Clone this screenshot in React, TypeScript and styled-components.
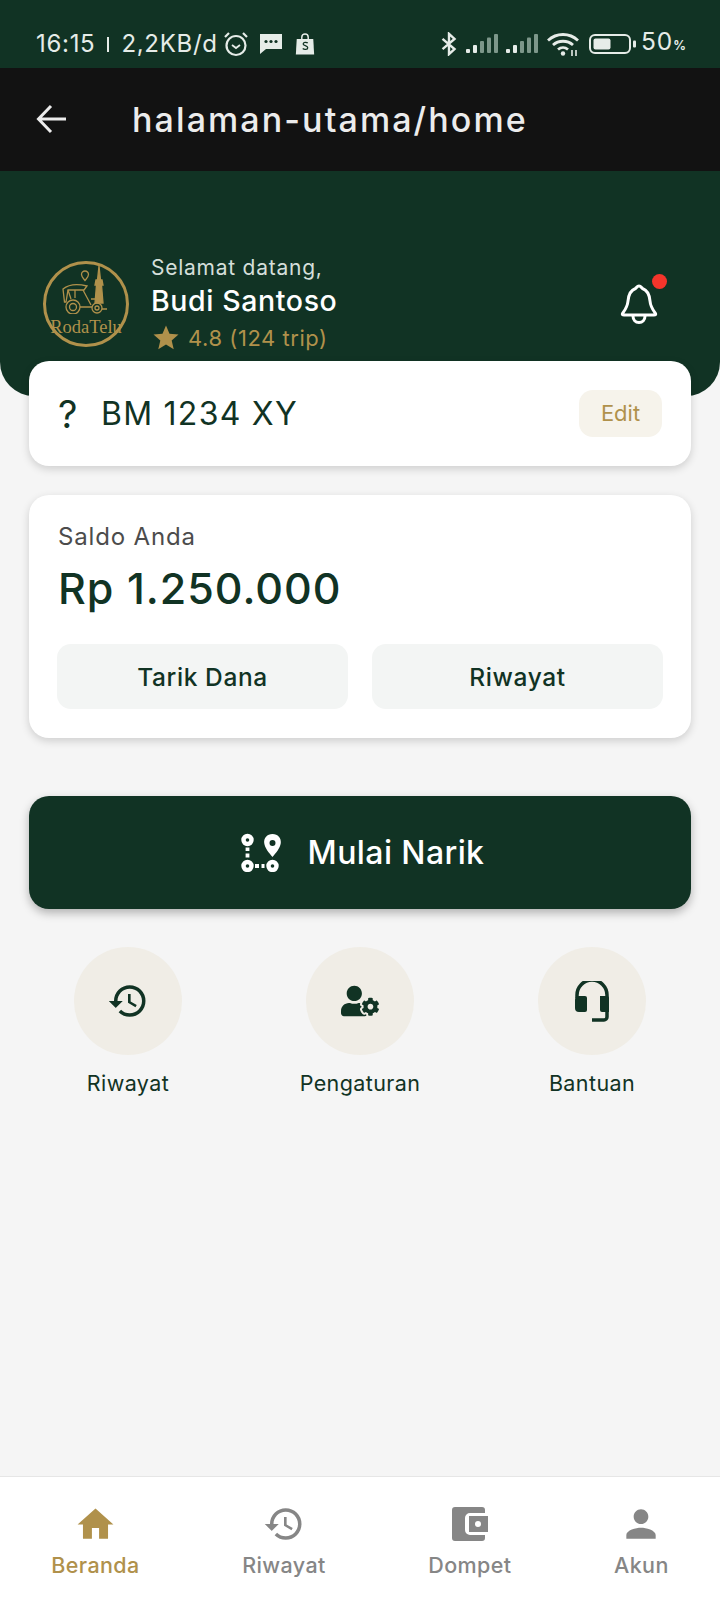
import React from "react";
import styled, { createGlobalStyle } from "styled-components";
import { FaUserCog } from "react-icons/fa";
import { MdHistory, MdHome, MdPerson, MdStar } from "react-icons/md";

const GREEN = "#113324";
const GOLD = "#B0914B";
const GREY = "#868686";

const GlobalStyle = createGlobalStyle`
  html, body {
    margin: 0;
    padding: 0;
    background: #f5f5f5;
    font-family: Inter, "Noto Sans", sans-serif;
  }
  * {
    box-sizing: border-box;
  }
`;

const Page = styled.div`
  width: 720px;
  height: 1600px;
  display: flex;
  flex-direction: column;
  background: #f5f5f5;
  overflow: hidden;
`;

const StatusBar = styled.div`
  height: 68px;
  flex: none;
  background: ${GREEN};
  color: #e6ece8;
  display: flex;
  align-items: center;
  justify-content: space-between;
  padding: 19px 34px 0 36px;
  font-size: 24px;
  line-height: 30px;
  letter-spacing: 0.7px;
`;

const StatusGroup = styled.div`
  display: flex;
  align-items: center;
`;

const StatusText = styled.span`
  white-space: pre;
`;

const StatusDivider = styled.span`
  width: 2px;
  height: 15px;
  margin: 1px 12px 0 12px;
  background: #e6ece8;
`;

const BatteryText = styled.span`
  white-space: pre;
  font-size: 24.5px;
  letter-spacing: 1px;
`;

const Percent = styled.small`
  font-size: 12.5px;
  font-weight: 700;
  letter-spacing: 0;
`;

const TopBar = styled.div`
  height: 103px;
  flex: none;
  background: #121212;
  color: #ececec;
  display: flex;
  align-items: center;
  padding: 0 0 1px 36px;
`;

const BackIcon = styled.svg`
  width: 32px;
  height: 32px;
  flex: none;
  margin-right: 64px;
`;

const Title = styled.div`
  font-size: 34px;
  font-weight: 500;
  letter-spacing: 2.1px;
`;

const Hero = styled.div`
  height: 225px;
  flex: none;
  background: ${GREEN};
  border-radius: 0 0 34px 34px;
  display: flex;
  align-items: flex-start;
  padding: 84px 0 0 43px;
`;

const LogoBadge = styled.div`
  position: relative;
  width: 86px;
  height: 86px;
  margin-top: 6px;
  flex: none;
  border: 3px solid ${GOLD};
  border-radius: 50%;
  color: ${GOLD};
`;

const LogoArt = styled.svg`
  display: block;
  width: 48px;
  height: 48px;
  margin: 2px 0 0 14px;
`;

const LogoText = styled.div`
  position: absolute;
  left: -3px;
  right: -3px;
  bottom: 8px;
  text-align: center;
  font-family: "Liberation Serif", serif;
  font-size: 18.5px;
  line-height: 18px;
  white-space: nowrap;
`;

const Greeting = styled.div`
  margin-left: 22px;
  display: flex;
  flex-direction: column;
  flex: 1;
`;

const Welcome = styled.div`
  font-size: 21px;
  line-height: 26px;
  letter-spacing: 0.75px;
  color: #d5dfda;
`;

const Name = styled.div`
  font-size: 28.5px;
  line-height: 36px;
  margin-top: 2px;
  font-weight: 500;
  letter-spacing: 0.6px;
  color: #ffffff;
`;

const Rating = styled.div`
  display: flex;
  align-items: center;
  margin-top: 3px;
  font-size: 22px;
  line-height: 28px;
  letter-spacing: 0.55px;
  color: ${GOLD};
  svg {
    width: 30px;
    height: 30px;
    margin: 1px 7px 0 0;
  }
`;

const BellWrap = styled.div`
  position: relative;
  width: 40px;
  height: 44px;
  margin: 27px 61px 0 0;
  flex: none;
`;

const BellIcon = styled.svg`
  display: block;
  width: 40px;
  height: 44px;
`;

const RedDot = styled.span`
  position: absolute;
  top: -8px;
  right: -8px;
  width: 15px;
  height: 15px;
  border-radius: 50%;
  background: #f5352b;
`;

const Content = styled.div`
  flex: 1;
  display: flex;
  flex-direction: column;
  margin-top: -35px;
  padding: 0 29px;
`;

const Card = styled.div`
  background: #ffffff;
  border-radius: 20px;
  box-shadow: 0 3px 8px rgba(0, 0, 0, 0.16);
`;

const PlateCard = styled(Card)`
  height: 105px;
  display: flex;
  align-items: center;
  padding: 0 29px;
  color: ${GREEN};
`;

const PlateMark = styled.span`
  width: 43px;
  font-size: 38px;
  font-weight: 400;
`;

const PlateText = styled.span`
  flex: 1;
  font-size: 32px;
  letter-spacing: 1.25px;
`;

const EditButton = styled.button`
  width: 83px;
  height: 47px;
  margin-bottom: 1px;
  border: 0;
  border-radius: 14px;
  background: #f6f3eb;
  color: ${GOLD};
  font-family: inherit;
  font-size: 22px;
  font-weight: 400;
`;

const BalanceCard = styled(Card)`
  height: 243px;
  margin-top: 29px;
  padding: 28px 29px 0;
`;

const BalanceLabel = styled.div`
  font-size: 24px;
  line-height: 28px;
  letter-spacing: 0.85px;
  color: #4c4c4c;
`;

const BalanceAmount = styled.div`
  font-size: 43px;
  line-height: 52px;
  margin-top: 11px;
  font-weight: 500;
  letter-spacing: 1px;
  color: ${GREEN};
`;

const BalanceActions = styled.div`
  display: grid;
  grid-template-columns: 1fr 1fr;
  gap: 24px;
  margin: 30px -1px 0 -1px;
`;

const SoftButton = styled.button`
  height: 65px;
  border: 0;
  border-radius: 14px;
  background: #f3f5f4;
  color: ${GREEN};
  font-family: inherit;
  font-size: 24.5px;
  font-weight: 450;
  letter-spacing: 0.6px;
`;

const StartButton = styled.button`
  height: 113px;
  margin-top: 58px;
  padding: 0 0 0 5px;
  border: 0;
  border-radius: 20px;
  background: ${GREEN};
  color: #ffffff;
  display: flex;
  align-items: center;
  justify-content: center;
  gap: 26px;
  font-family: inherit;
  font-size: 32px;
  font-weight: 450;
  letter-spacing: 0.4px;
  box-shadow: 0 4px 10px rgba(0, 0, 0, 0.28);
`;

const QuickRow = styled.div`
  display: grid;
  grid-template-columns: repeat(3, 1fr);
  margin: 38px -17px 0;
`;

const QuickItem = styled.div`
  display: flex;
  flex-direction: column;
  align-items: center;
  color: ${GREEN};
`;

const QuickCircle = styled.div`
  width: 108px;
  height: 108px;
  border-radius: 50%;
  background: #f0ede6;
  display: flex;
  align-items: center;
  justify-content: center;
`;

const QuickLabel = styled.div`
  margin-top: 14px;
  font-size: 21.5px;
  line-height: 28px;
  letter-spacing: 0.4px;
`;

const TabBar = styled.div`
  height: 124px;
  flex: none;
  background: #ffffff;
  border-top: 1px solid #e6e6e6;
  display: flex;
  justify-content: space-around;
  padding-top: 26px;
`;

const TabItem = styled.div<{ $active?: boolean }>`
  display: flex;
  flex-direction: column;
  align-items: center;
  color: ${(p) => (p.$active ? GOLD : GREY)};
  font-size: 21.5px;
  line-height: 28px;
  font-weight: 450;
  letter-spacing: 0.4px;
`;

const TabIcon = styled.div`
  height: 42px;
  margin-bottom: 6px;
  display: flex;
  align-items: center;
  justify-content: center;
`;

const AlarmIcon = () => (
  <svg width="26" height="26" viewBox="0 0 26 26" fill="none" stroke="#e6ece8" strokeWidth="2.2" style={{ marginLeft: 5 }}>
    <circle cx="13" cy="14.5" r="9.5" />
    <path d="M9 14l4 3 4-3" strokeWidth="1.8" />
    <path d="M2 6l4-4M24 6l-4-4" />
  </svg>
);

const MessageIcon = () => (
  <svg width="24" height="22" viewBox="0 0 24 22" style={{ marginLeft: 10 }}>
    <path d="M1 1h22v15H7l-6 5z" fill="#e6ece8" />
    <circle cx="7" cy="8.5" r="1.6" fill="#113324" />
    <circle cx="12" cy="8.5" r="1.6" fill="#113324" />
    <circle cx="17" cy="8.5" r="1.6" fill="#113324" />
  </svg>
);

const BagIcon = () => (
  <svg width="20" height="22" viewBox="0 0 20 24" style={{ marginLeft: 12 }}>
    <path d="M6.5 7V4.5a3.5 3.5 0 0 1 7 0V7" fill="none" stroke="#e6ece8" strokeWidth="1.6" />
    <path d="M1 6.500h18l1 17H0z" fill="#e6ece8" />
    <path d="M13 11c-1.500-1.400-5-1-5 1s5 1.600 5 4-4 2.400-5.500 1" fill="none" stroke="#113324" strokeWidth="1.4" />
  </svg>
);

const BluetoothIcon = () => (
  <svg width="18" height="24" viewBox="0 0 18 26" fill="none" stroke="#e6ece8" strokeWidth="2.600">
    <path d="M2 7.500l13 11-6 5.500V2l6 5.500-13 11" />
  </svg>
);

const SignalIcon = () => (
  <svg width="32" height="19" viewBox="0 0 32 19" style={{ marginLeft: 8 }}>
    <rect x="0" y="15" width="4" height="4" rx="1" fill="#e6ece8" />
    <rect x="7" y="11" width="4" height="8" rx="1" fill="#e6ece8" />
    <rect x="14" y="7" width="4" height="12" rx="1" fill="#7d978a" />
    <rect x="21" y="3.500" width="4" height="15.500" rx="1" fill="#7d978a" />
    <rect x="28" y="0" width="4" height="19" rx="1" fill="#7d978a" />
  </svg>
);

const WifiIcon = () => (
  <svg width="32" height="24" viewBox="0 0 32 24" fill="none" stroke="#e6ece8" strokeWidth="2.800" style={{ marginLeft: 9 }}>
    <path d="M1 8.500c8.500-8 21.500-8 30 0" />
    <path d="M6 13c5.500-5 14.500-5 20 0" />
    <path d="M11 17.500c3-2.500 7-2.500 10 0" />
    <circle cx="16" cy="21.500" r="2.200" fill="#e6ece8" stroke="none" />
    <path d="M25 18v6M29 18v6" strokeWidth="1.600" />
  </svg>
);

const BatteryIcon = () => (
  <svg width="47" height="20" viewBox="0 0 47 20" style={{ margin: "0 5px 0 10px" }}>
    <rect x="1" y="1" width="40" height="18" rx="5" fill="none" stroke="#e6ece8" strokeWidth="2" />
    <rect x="4.500" y="4.500" width="17" height="11" rx="2" fill="#e6ece8" />
    <rect x="44" y="6.500" width="3" height="7" rx="1" fill="#e6ece8" />
  </svg>
);

const RouteIcon = () => (
  <svg width="41" height="39" viewBox="0 0 41 39" fill="none">
    <circle cx="6.500" cy="7" r="4" stroke="#fff" strokeWidth="4.400" />
    <path d="M6.500 14.500v3.500M6.500 20.500v4" stroke="#fff" strokeWidth="3.800" />
    <circle cx="6.500" cy="33" r="4" stroke="#fff" strokeWidth="4.400" />
    <path d="M14 33h4M20.500 33h3" stroke="#fff" strokeWidth="3.800" />
    <circle cx="31.500" cy="33" r="4" stroke="#fff" strokeWidth="4.400" />
    <path
      fillRule="evenodd"
      clipRule="evenodd"
      d="M31.500 1c5.500 0 8.800 4 8.300 9-.5 5-5 10-8.300 14-3.300-4-7.800-9-8.300-14-.5-5 2.800-9 8.300-9zm0 6a3 3 0 1 0 0 6 3 3 0 0 0 0-6z"
      fill="#fff"
    />
  </svg>
);

const HeadsetIcon = () => (
  <svg width="34" height="41" viewBox="0 0 34 41" fill="currentColor">
    <path d="M2 17v-3a15 15 0 0 1 30 0v22a3 3 0 0 1-3 3H17" fill="none" stroke="currentColor" strokeWidth="3.500" />
    <path d="M4 15h6a2 2 0 0 1 2 2v12a2 2 0 0 1-2 2H4a4 4 0 0 1-4-4V19a4 4 0 0 1 4-4z" />
    <path d="M25 15h7a2 2 0 0 1 2 2v14h-7a2 2 0 0 1-2-2z" />
  </svg>
);

const WalletIcon = () => (
  <svg width="36" height="34" viewBox="0 0 36 34" fill={GREY}>
    <path d="M3 0h27a3 3 0 0 1 3 3v3H18a5 5 0 0 0-5 5v12a5 5 0 0 0 5 5h15v3a3 3 0 0 1-3 3H3a3 3 0 0 1-3-3V3a3 3 0 0 1 3-3z" />
    <path fillRule="evenodd" d="M17 9h19v16H17zm9 5a3 3 0 1 0 0 6 3 3 0 0 0 0-6z" />
  </svg>
);

const App: React.FC = () => {
  const tabs = [
    { label: "Beranda", icon: <MdHome size={43} />, active: true },
    { label: "Riwayat", icon: <MdHistory size={42} /> },
    { label: "Dompet", icon: <WalletIcon /> },
    { label: "Akun", icon: <MdPerson size={44} /> },
  ];

  return (
    <Page>
      <GlobalStyle />
      <StatusBar>
        <StatusGroup>
          <StatusText>16:15</StatusText>
          <StatusDivider />
          <StatusText>2,2KB/d</StatusText>
          <AlarmIcon />
          <MessageIcon />
          <BagIcon />
        </StatusGroup>
        <StatusGroup>
          <BluetoothIcon />
          <SignalIcon />
          <SignalIcon />
          <WifiIcon />
          <BatteryIcon />
          <BatteryText>
            50<Percent>%</Percent>
          </BatteryText>
        </StatusGroup>
      </StatusBar>
      <TopBar>
        <BackIcon viewBox="0 0 32 32" fill="none" stroke="#ececec" strokeWidth="3">
          <path d="M30 16H3M15 3L2.500 16 15 29" />
        </BackIcon>
        <Title>halaman-utama/home</Title>
      </TopBar>
      <Hero>
        <LogoBadge>
          <LogoArt viewBox="0 0 48 48" fill="none" stroke="currentColor" strokeWidth="1.300">
            <path d="M25 14.500c-2-2.500-3.500-4-3.500-6a3.500 3.500 0 0 1 7 0c0 2-1.500 3.500-3.500 6z" />
            <path d="M39 0l1.500 14h-3zM36 14h6l1 5h-8zM36.500 19h5l1.500 18h-8z" fill="currentColor" />
            <path d="M3 23c6-5 16-5 24-3l-3 4H8l-2 12H4.500z" />
            <path d="M8 24l3 9M15 24v8M23 24l8 15" />
            <circle cx="13" cy="41" r="7" />
            <circle cx="13" cy="41" r="3.500" />
            <circle cx="37" cy="42" r="5" />
            <circle cx="37" cy="42" r="2" />
            <path d="M20 41h12M31 33h6M42 43h5" />
          </LogoArt>
          <LogoText>RodaTelu</LogoText>
        </LogoBadge>
        <Greeting>
          <Welcome>Selamat datang,</Welcome>
          <Name>Budi Santoso</Name>
          <Rating>
            <MdStar />
            4.8 (124 trip)
          </Rating>
        </Greeting>
        <BellWrap>
          <BellIcon viewBox="0 0 40 44" fill="none" stroke="#fff" strokeWidth="3" strokeLinejoin="round">
            <path d="M20 4c-1.500 0-2.500 1.500-3.500 2.500C11 8.500 9.500 13 9 19c-.5 6-3 9-5.500 12.500C3 32.500 3.500 33 5 33h30c1.500 0 2-.5 1.500-1.500C34 28 31.500 25 31 19c-.5-6-2-10.500-7.500-12.500C22.500 5.500 21.500 4 20 4z" />
            <path d="M14 34c0 4 2.500 6.500 6 6.500s6-2.500 6-6.500" />
          </BellIcon>
          <RedDot />
        </BellWrap>
      </Hero>
      <Content>
        <PlateCard>
          <PlateMark>?</PlateMark>
          <PlateText>BM 1234 XY</PlateText>
          <EditButton>Edit</EditButton>
        </PlateCard>
        <BalanceCard>
          <BalanceLabel>Saldo Anda</BalanceLabel>
          <BalanceAmount>Rp 1.250.000</BalanceAmount>
          <BalanceActions>
            <SoftButton>Tarik Dana</SoftButton>
            <SoftButton>Riwayat</SoftButton>
          </BalanceActions>
        </BalanceCard>
        <StartButton>
          <RouteIcon />
          Mulai Narik
        </StartButton>
        <QuickRow>
          <QuickItem>
            <QuickCircle>
              <MdHistory size={42} />
            </QuickCircle>
            <QuickLabel>Riwayat</QuickLabel>
          </QuickItem>
          <QuickItem>
            <QuickCircle>
              <FaUserCog size={38} />
            </QuickCircle>
            <QuickLabel>Pengaturan</QuickLabel>
          </QuickItem>
          <QuickItem>
            <QuickCircle>
              <HeadsetIcon />
            </QuickCircle>
            <QuickLabel>Bantuan</QuickLabel>
          </QuickItem>
        </QuickRow>
      </Content>
      <TabBar>
        {tabs.map((tab) => (
          <TabItem key={tab.label} $active={tab.active}>
            <TabIcon>{tab.icon}</TabIcon>
            {tab.label}
          </TabItem>
        ))}
      </TabBar>
    </Page>
  );
};

export default App;
